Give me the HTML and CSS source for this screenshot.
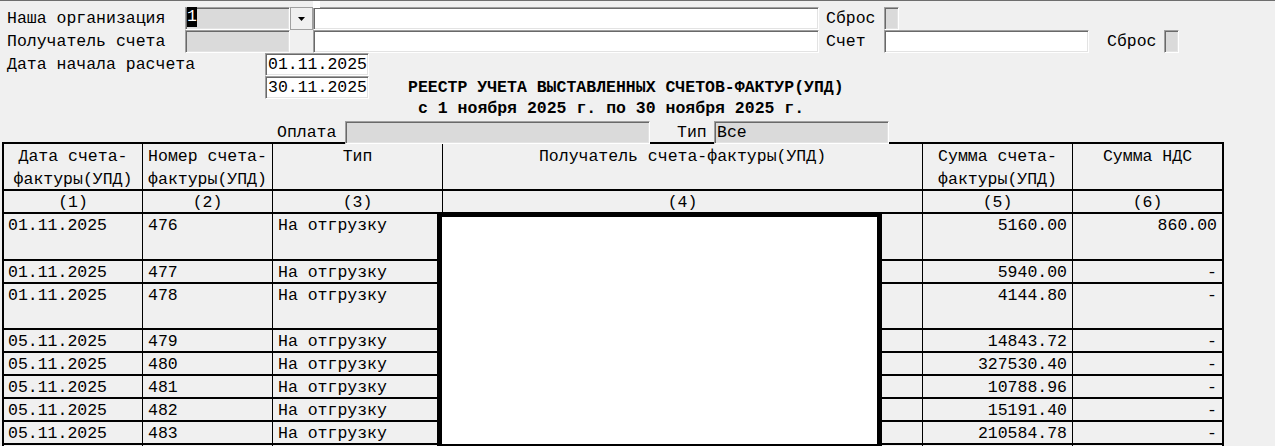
FILE: index.html
```html
<!DOCTYPE html>
<html lang="ru">
<head>
<meta charset="utf-8">
<title>Реестр учета выставленных счетов-фактур</title>
<link rel="stylesheet" href="styles.css">
</head>
<body>
<div class="page">
  <div class="strip"></div>
  <div class="form">
    <div class="frow">
      <span class="lbl lbl-main">Наша организация</span>
      <div class="inp gray w-org"><span class="sel">1</span></div>
      <div class="ddbtn"><svg width="7" height="4" viewBox="0 0 7 4"><polygon points="0,0 7,0 3.5,4" fill="#000"/></svg></div>
      <div class="inp white w-long"></div>
      <span class="lbl lbl-side">Сброс</span>
      <div class="inp gray box"></div>
    </div>
    <div class="frow">
      <span class="lbl lbl-main">Получатель счета</span>
      <div class="inp gray w-org"></div>
      <div class="ddgap"></div>
      <div class="inp white w-long"></div>
      <span class="lbl lbl-side">Счет</span>
      <div class="inp white w-acc"></div>
      <span class="lbl lbl-reset2">Сброс</span>
      <div class="inp gray box"></div>
    </div>
    <div class="frow">
      <span class="lbl lbl-date">Дата начала расчета</span>
      <div class="inp white w-date">01.11.2025</div>
    </div>
    <div class="frow">
      <span class="lbl lbl-date"></span>
      <div class="inp white w-date">30.11.2025</div>
      <span class="title">РЕЕСТР УЧЕТА ВЫСТАВЛЕННЫХ СЧЕТОВ-ФАКТУР(УПД)</span>
    </div>
    <div class="subtitle">с 1 ноября 2025 г. по 30 ноября 2025 г.</div>
    <div class="frow filter">
      <span class="lbl lbl-pay">Оплата</span>
      <div class="inp gray w-pay"></div>
      <span class="lbl lbl-type">Тип</span>
      <div class="inp gray w-type">Все</div>
    </div>
  </div>

  <div class="tbl">
    <div class="tr th">
      <div class="c">Дата счета-<br>фактуры(УПД)</div>
      <div class="c">Номер счета-<br>фактуры(УПД)</div>
      <div class="c">Тип</div>
      <div class="c">Получатель счета-фактуры(УПД)</div>
      <div class="c">Сумма счета-<br>фактуры(УПД)</div>
      <div class="c">Сумма НДС</div>
    </div>
    <div class="tr tn">
      <div class="c">(1)</div>
      <div class="c">(2)</div>
      <div class="c">(3)</div>
      <div class="c">(4)</div>
      <div class="c">(5)</div>
      <div class="c">(6)</div>
    </div>
    <div class="tr td h47">
      <div class="c">01.11.2025</div><div class="c">476</div><div class="c">На отгрузку</div><div class="c"></div><div class="c num">5160.00</div><div class="c num">860.00</div>
    </div>
    <div class="tr td">
      <div class="c">01.11.2025</div><div class="c">477</div><div class="c">На отгрузку</div><div class="c"></div><div class="c num">5940.00</div><div class="c num">-</div>
    </div>
    <div class="tr td h46">
      <div class="c">01.11.2025</div><div class="c">478</div><div class="c">На отгрузку</div><div class="c"></div><div class="c num">4144.80</div><div class="c num">-</div>
    </div>
    <div class="tr td">
      <div class="c">05.11.2025</div><div class="c">479</div><div class="c">На отгрузку</div><div class="c"></div><div class="c num">14843.72</div><div class="c num">-</div>
    </div>
    <div class="tr td">
      <div class="c">05.11.2025</div><div class="c">480</div><div class="c">На отгрузку</div><div class="c"></div><div class="c num">327530.40</div><div class="c num">-</div>
    </div>
    <div class="tr td">
      <div class="c">05.11.2025</div><div class="c">481</div><div class="c">На отгрузку</div><div class="c"></div><div class="c num">10788.96</div><div class="c num">-</div>
    </div>
    <div class="tr td">
      <div class="c">05.11.2025</div><div class="c">482</div><div class="c">На отгрузку</div><div class="c"></div><div class="c num">15191.40</div><div class="c num">-</div>
    </div>
    <div class="tr td">
      <div class="c">05.11.2025</div><div class="c">483</div><div class="c">На отгрузку</div><div class="c"></div><div class="c num">210584.78</div><div class="c num">-</div>
    </div>
    <div class="tr td">
      <div class="c"></div><div class="c"></div><div class="c"></div><div class="c"></div><div class="c num"></div><div class="c num"></div>
    </div>
  </div>

  <div class="redact"></div>
</div>
</body>
</html>
```

FILE: styles.css
```css
* { box-sizing: border-box; }
html, body { margin: 0; padding: 0; overflow: hidden; background: #f0f0f0; }
body {
  font-family: "Liberation Mono", "Courier New", monospace;
  font-size: 16.5px;
  color: #000;
}
.page {
  position: relative;
  width: 1275px;
  height: 446px;
  overflow: hidden;
  border-top: 1px solid #6e6e6e;
}
.strip {
  position: absolute;
  left: 313px; top: -1px;
  width: 7px; height: 8px;
  background: #fff;
  z-index: 2;
}
.form { padding-top: 6px; }
.frow {
  display: flex;
  align-items: center;
  height: 23px;
  line-height: 23px;
}
.lbl { white-space: pre; flex: none; }
.lbl-main { width: 185px; padding-left: 7px; }
.lbl-date { width: 265px; padding-left: 7px; }
.lbl-side { width: 58px; margin-left: 7px; }
.lbl-reset2 { width: 57px; margin-left: 18px; }
.lbl-pay { width: 68px; margin-left: 277px; }
.lbl-type { width: 37px; margin-left: 27px; }

.inp {
  flex: none;
  height: 23px;
  border-style: solid;
  border-width: 1px;
  border-color: #a0a0a0 #ffffff #ffffff #a0a0a0;
  box-shadow: inset 1px 1px 0 #696969, inset -1px -1px 0 #e3e3e3;
  padding-left: 2px;
  line-height: 21px;
  white-space: pre;
}
.gray { background: #dadada; }
.white { background: #ffffff; }
.w-org { width: 105px; padding-left: 1px; }
.w-long { width: 506px; }
.w-acc { width: 205px; }
.w-date { width: 104px; }
.w-pay { width: 305px; }
.w-type { width: 175px; }
.box { width: 15px; }

.sel {
  display: inline-block;
  background: #000;
  color: #fff;
  width: 10px;
  height: 20px;
  line-height: 19px;
  margin-top: -1px;
  vertical-align: top;
}
.ddbtn {
  flex: none;
  width: 23px;
  height: 23px;
  background: #f0f0f0;
  border: 1px solid #a0a0a0;
  display: flex;
  align-items: center;
  justify-content: center;
}
.ddbtn svg { display: block; margin-top: 1px; }
.ddgap { flex: none; width: 23px; height: 23px; }

.title {
  margin-left: 39px;
  font-weight: bold;
  white-space: pre;
}
.subtitle {
  height: 22px;
  line-height: 19px;
  padding-left: 418px;
  font-weight: bold;
  white-space: pre;
}
.filter {
  position: relative;
  z-index: 1;
  margin-bottom: -2px;
}

.tbl {
  margin-left: 2px;
  width: 1222px;
  border: 2px solid #000;
  border-bottom: none;
}
.tr {
  display: grid;
  grid-template-columns: 139px 130px 170px 480px 150px 149px;
  height: 23px;
  border-bottom: 2px solid #000;
}
.tr .c {
  border-right: 1px solid #000;
  white-space: pre;
  overflow: hidden;
}
.tr .c:last-child { border-right: none; }
.th { height: 47px; }
.th .c {
  text-align: center;
  line-height: 23px;
  padding-top: 1px;
  white-space: normal;
}
.tn .c {
  text-align: center;
  line-height: 21px;
  padding-top: 1px;
}
.td .c {
  line-height: 21px;
  padding: 1px 4px 0 4px;
}
.td .c:nth-child(2), .td .c:nth-child(3) { padding-left: 5px; }
.td .num { text-align: right; padding-right: 5px; }
.h47 { height: 47px; }
.h46 { height: 46px; }

.redact {
  position: absolute;
  left: 437px;
  top: 211px;
  width: 445px;
  height: 237px;
  background: #fff;
  border: 5px solid #000;
}
```
